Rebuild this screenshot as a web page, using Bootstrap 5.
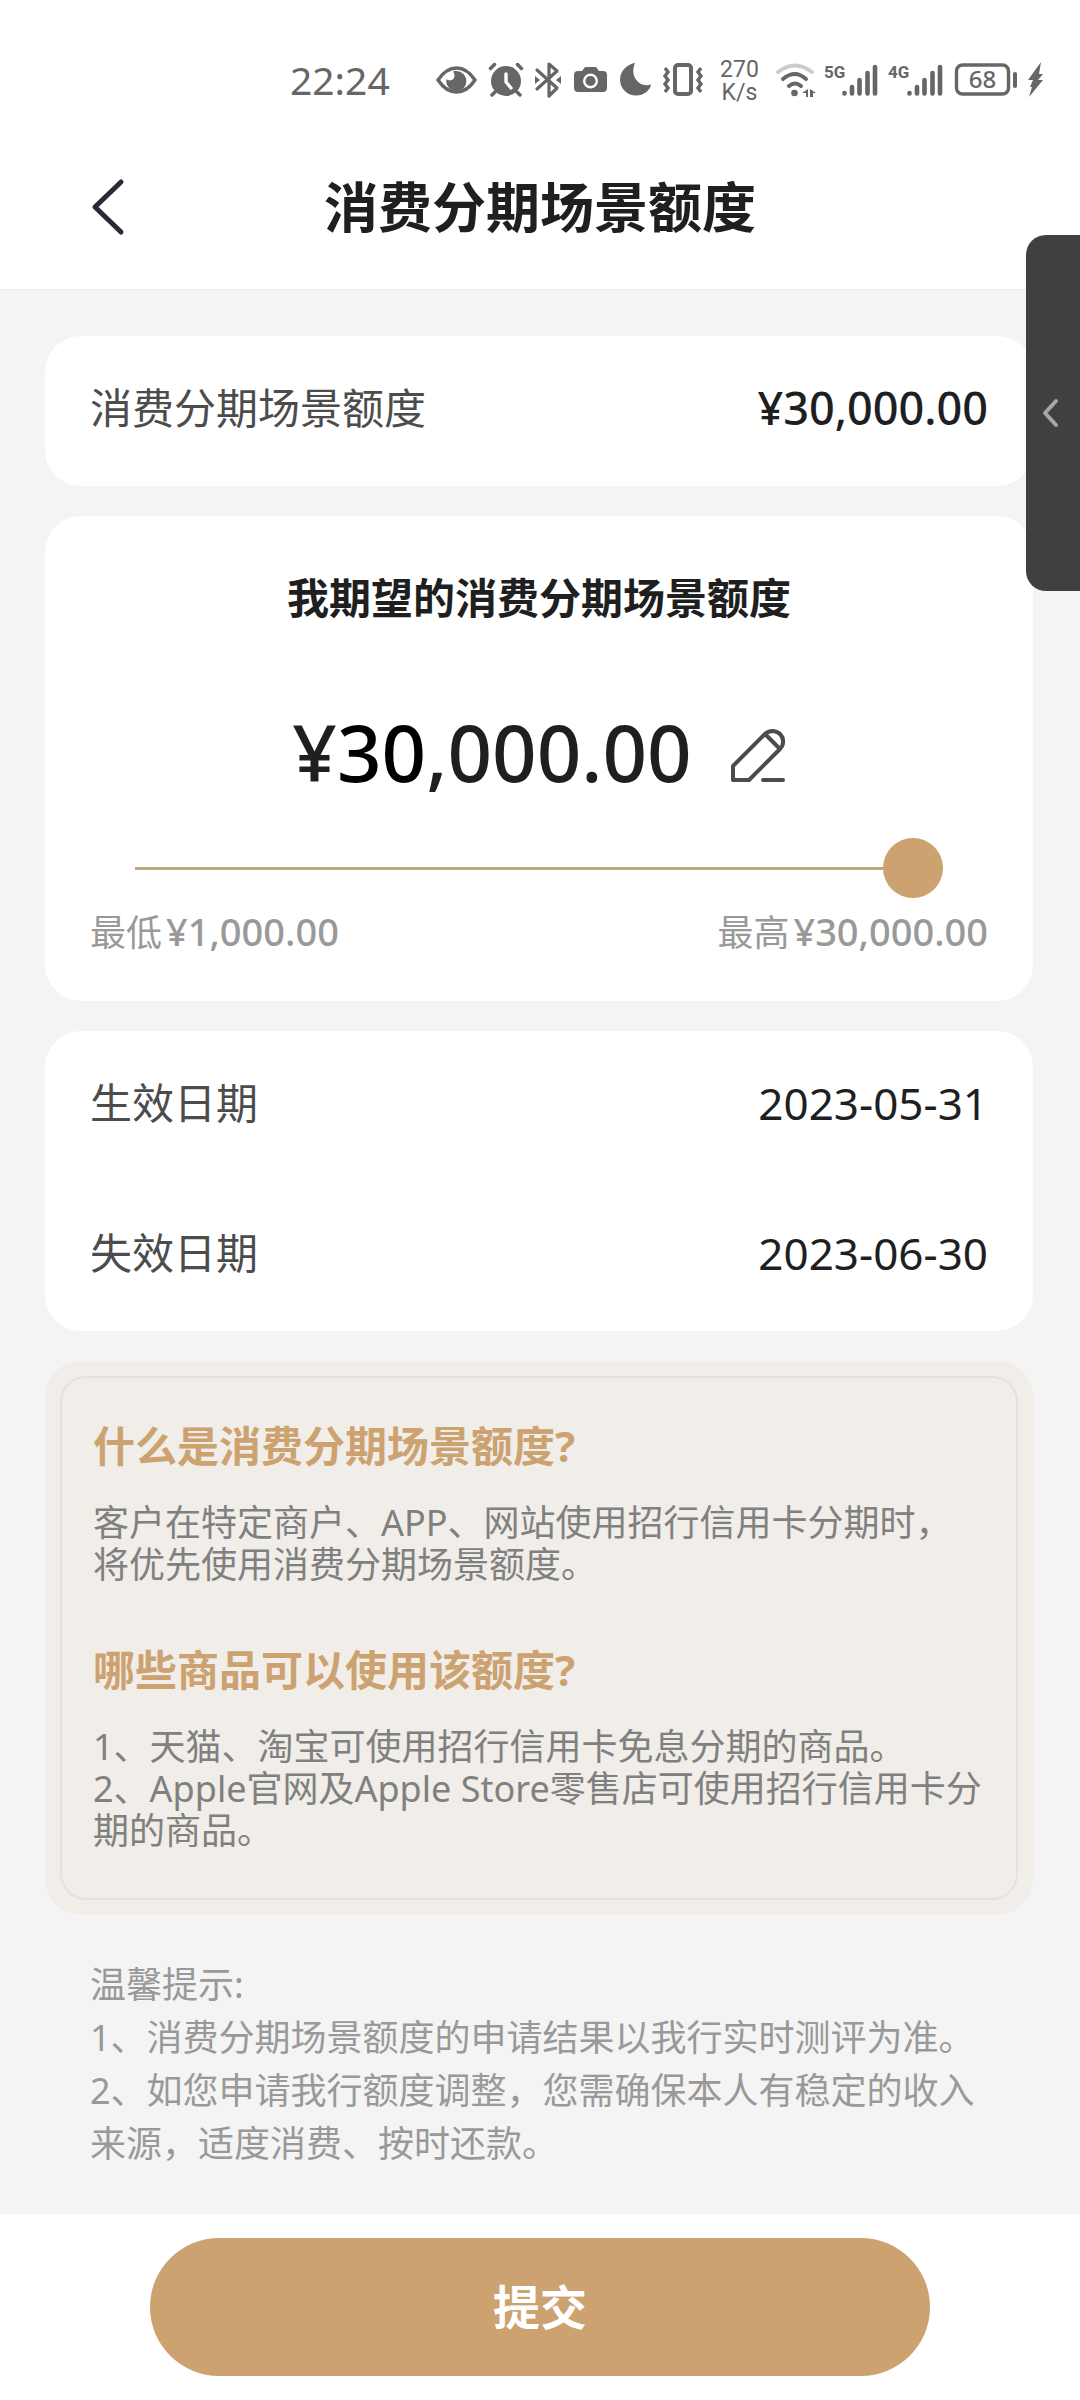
<!DOCTYPE html>
<html lang="zh-CN">
<head>
<meta charset="utf-8">
<meta name="viewport" content="width=device-width, initial-scale=1">
<title>消费分期场景额度</title>
<link rel="stylesheet" href="https://cdn.jsdelivr.net/npm/bootstrap@5.3.0/dist/css/bootstrap.min.css">
<style>
  :root { --gold: #cca271; --ink: #1f1f1f; --label: #4c4c4c; --muted: #999; --status: #666; }
  body { font-family: "Noto Sans", "Noto Sans CJK SC", sans-serif; background: #f4f4f4; color: var(--ink); }
  .status-bar { height: 160px; padding: 0 38px 0 290px; color: var(--status); }
  .status-time { font-size: 39px; line-height: 48px; }
  .status-icons { gap: 12px; }
  .status-icons svg { display: block; overflow: visible; }
  .net-speed { width: 49px; padding-top: 2px; font: 23px/23px Roboto, sans-serif; }
  .title-bar { height: 130px; padding: 0 90px 36px; border-bottom: 1px solid #ececec; }
  .title-bar h1 { font-size: 54px; line-height: 64px; }
  .side-slot { width: 54px; }
  .panels { padding: 46px 47px 0 45px; gap: 30px; }
  .panel { border: 0; border-radius: 36px; }
  .line-item { height: 150px; padding: 0 45px 6px; font-size: 42px; line-height: 60px; }
  .line-item dt { color: var(--label); font-weight: 400; }
  .line-item dd { font-size: 44px; }
  .line-item .money { font-size: 45px; font-weight: 500; }
  .wish { padding: 52px 45px 44px; }
  .wish h2 { font-size: 42px; line-height: 60px; }
  .wish-amount { font-size: 78px; line-height: 100px; font-weight: 500; gap: 38px; margin-top: 74px; }
  .edit-btn { padding: 6px 0 0; }
  .wish-slider { padding: 0 45px; margin-top: 36px; }
  .amount-range { -webkit-appearance: none; appearance: none; display: block; width: 100%; height: 60px; margin: 0; background: linear-gradient(#bca97a, #bca97a) center / 100% 3px no-repeat; }
  .amount-range::-webkit-slider-thumb { -webkit-appearance: none; width: 60px; height: 60px; border-radius: 50%; background: var(--gold); }
  .amount-range::-moz-range-thumb { width: 60px; height: 60px; border: 0; border-radius: 50%; background: var(--gold); }
  .limits { color: var(--muted); font-size: 36px; line-height: 48px; margin-top: 9px; }
  .limits b { font-size: 38px; font-weight: 500; margin-left: 4px; }
  .faq { background: #f1ede8; padding: 15px; }
  .faq-inner { border: 2px solid #e8e1d9; border-radius: 26px; padding: 38px 31px 46px; }
  .faq h3 { color: var(--gold); font-size: 42px; line-height: 60px; margin-bottom: 26px; }
  .faq p { color: #808080; font-size: 36px; line-height: 42px; margin-bottom: 54px; }
  .faq p:last-child { margin-bottom: 0; }
  .tips { color: var(--muted); font-size: 36px; line-height: 53px; padding: 43px 90px 44px; }
  .submit-bar { padding: 24px 150px; }
  .submit-btn { --bs-btn-bg: #cca271; --bs-btn-color: #fff; --bs-btn-hover-bg: #bd9361; --bs-btn-hover-color: #fff; --bs-btn-active-bg: #b18755; --bs-btn-border-width: 0; height: 138px; font-size: 47px; }
  .side-tab { top: 235px; right: 0; width: 54px; height: 356px; background: #404040; border-radius: 20px 0 0 20px; }
</style>
</head>
<body class="position-relative">
<header class="bg-white">
  <div class="status-bar d-flex align-items-center justify-content-between">
    <span class="status-time">22:24</span>
    <div class="status-icons d-flex align-items-center">
      <svg width="41" height="36" viewBox="0 0 41 36" fill="none" stroke="currentColor" stroke-width="3.400"><path d="M2 18C8 9 14 6 20.500 6S33 9 39 18C33 27 27 30 20.500 30S8 27 2 18Z"/><path fill="currentColor" stroke="none" d="M20 9a10 10 0 1 1-9.500 8c3 3 8 1 8-3 0-2-.5-3-1.500-4.500 1-.4 2-.5 3-.5Z"/></svg>
      <svg width="34" height="36" viewBox="0 0 34 36"><circle cx="17" cy="19" r="15" fill="currentColor"/><path d="M1.500 6.500l4-4M32.500 6.500l-4-4M6 30l-3 3M28 30l3 3" stroke="currentColor" stroke-width="3.500" stroke-linecap="round"/><path d="M17 12v8l5 6" fill="none" stroke="#fff" stroke-width="3.400" stroke-linecap="round" stroke-linejoin="round"/></svg>
      <svg width="26" height="36" viewBox="0 0 26 36" fill="none" stroke="currentColor" stroke-width="3.200" stroke-linecap="round" stroke-linejoin="round"><path d="M2 8l20 18-8 8V2l8 7L2 27"/><path fill="currentColor" stroke="none" d="M0 14l5 4-5 4zM26 14l-5 4 5 4z"/></svg>
      <svg width="35" height="36" viewBox="0 0 35 36"><path fill="currentColor" d="M5 9h4l3-4h11l3 4h4a4 4 0 0 1 4 4v13a4 4 0 0 1-4 4H5a4 4 0 0 1-4-4V13a4 4 0 0 1 4-4Z"/><circle cx="17.500" cy="19" r="6.300" fill="currentColor" stroke="#fff" stroke-width="2.400"/></svg>
      <svg width="31" height="36" viewBox="0 0 31 36"><path fill="currentColor" d="M15 1C8 2 0 8 0 18a16 16 0 0 0 16 15.500c8 0 14-5 15-11C20 26 9 15 15 1Z"/></svg>
      <svg width="40" height="36" viewBox="0 0 40 36" fill="none" stroke="currentColor"><rect x="12" y="3" width="16" height="29" rx="3" stroke-width="4"/><path stroke-width="3.400" d="M2 6l3 4-3 4 3 4-3 4 3 4-3 4M38 6l-3 4 3 4-3 4 3 4-3 4 3 4"/></svg>
      <div class="net-speed text-center">270<br>K/s</div>
      <svg width="37" height="36" viewBox="0 0 37 36" fill="none" stroke-width="4" stroke-linecap="round"><path stroke="#ccc" d="M2 10Q19 -3 36 10"/><path stroke="currentColor" d="M7 17Q19 7 30 17M13 24Q19 19 25 24"/><circle cx="18.500" cy="31" r="3.300" fill="currentColor"/><path fill="currentColor" d="M32 27v8h-2v-4h-4zM34 27l6 4h-3v4h-3z"/></svg>
      <svg width="52" height="36" viewBox="0 0 52 36"><text x="-1" y="16" font-family="Roboto" font-size="17" font-weight="700" fill="currentColor">5G</text><path stroke="currentColor" stroke-width="4.600" stroke-linecap="round" d="M19.500 31.500v-.5M27 31.500V25M34.500 31.500V18M42.500 31.500V11M50 31.500V5"/></svg>
      <svg width="53" height="36" viewBox="0 0 53 36"><text x="-1" y="16" font-family="Roboto" font-size="17" font-weight="700" fill="currentColor">4G</text><path stroke="currentColor" stroke-width="4.600" stroke-linecap="round" d="M20.500 31.500v-.5M28 31.500V25M35.500 31.500V18M43.500 31.500V11M51 31.500V5"/></svg>
      <svg width="64" height="36" viewBox="0 0 64 36"><rect x="2.500" y="3" width="52" height="29" rx="6" fill="none" stroke="currentColor" stroke-width="3.400"/><path stroke="currentColor" stroke-width="4" stroke-linecap="round" d="M61 12v12"/><text x="28.500" y="26" text-anchor="middle" font-family="Noto Sans" font-size="24" font-weight="500" fill="currentColor">68</text></svg>
      <svg width="12" height="36" viewBox="0 0 12 36"><path fill="currentColor" d="M11 0L-2 18h5l-3 7h2L-1 35l14-17H8l5-6H9z"/></svg>
    </div>
  </div>
  <nav class="title-bar d-flex align-items-center justify-content-between" aria-label="页面导航">
    <a href="#" class="side-slot d-block" aria-label="返回"><svg class="d-block" width="40" height="58" viewBox="0 0 40 58" fill="none" stroke="#2b2937" stroke-width="5" stroke-linecap="round" stroke-linejoin="round"><path d="M31 4L5 29l26 25"/></svg></a>
    <h1 class="fw-bold m-0">消费分期场景额度</h1>
    <span class="side-slot"></span>
  </nav>
</header>

<main>
  <div class="panels d-flex flex-column">
    <section class="card panel">
      <dl class="m-0">
        <div class="line-item d-flex align-items-center justify-content-between"><dt>消费分期场景额度</dt><dd class="money m-0">¥30,000.00</dd></div>
      </dl>
    </section>

    <section class="card panel wish">
      <h2 class="fw-bold text-center m-0"><label for="amount">我期望的消费分期场景额度</label></h2>
      <div class="wish-amount d-flex align-items-center justify-content-center">
        <output for="amount">¥<span class="text-black">30</span>,000.00</output>
        <button type="button" class="edit-btn btn border-0 lh-1" aria-label="编辑额度"><svg class="d-block" width="56" height="56" viewBox="0 0 56 56" fill="none" stroke="#4c4c4c" stroke-width="4" stroke-linecap="round" stroke-linejoin="round"><path d="M3 53V39L35 7A10.500 10.500 0 0 1 50 22L19 53ZM35 7L50 22M33 53h20"/></svg></button>
      </div>
      <div class="wish-slider"><input type="range" class="amount-range" id="amount" min="1000" max="30000" step="1000" value="30000"></div>
      <div class="limits d-flex justify-content-between"><span>最低<b>¥1,000.00</b></span><span>最高<b>¥30,000.00</b></span></div>
    </section>

    <section class="card panel">
      <dl class="m-0">
        <div class="line-item d-flex align-items-center justify-content-between"><dt>生效日期</dt><dd class="m-0">2023-05-31</dd></div>
        <div class="line-item d-flex align-items-center justify-content-between"><dt>失效日期</dt><dd class="m-0">2023-06-30</dd></div>
      </dl>
    </section>

    <section class="card panel faq">
      <div class="faq-inner">
        <h3 class="fw-bold">什么是消费分期场景额度?</h3>
        <p>客户在特定商户、APP、网站使用招行信用卡分期时，将优先使用消费分期场景额度。</p>
        <h3 class="fw-bold">哪些商品可以使用该额度?</h3>
        <p>1、天猫、淘宝可使用招行信用卡免息分期的商品。<br>2、Apple官网及Apple Store零售店可使用招行信用卡分期的商品。</p>
      </div>
    </section>
  </div>

  <p class="tips m-0">温馨提示:<br>1、消费分期场景额度的申请结果以我行实时测评为准。<br>2、如您申请我行额度调整，您需确保本人有稳定的收入来源，适度消费、按时还款。</p>
</main>

<footer class="submit-bar bg-white">
  <button type="button" class="btn submit-btn w-100 rounded-pill fw-bold">提交</button>
</footer>

<button type="button" class="side-tab btn position-absolute border-0 py-0 ps-0 pe-1 d-flex align-items-center justify-content-center" aria-label="展开侧边栏"><svg width="18" height="30" viewBox="0 0 18 30" fill="none" stroke="#a6a6a6" stroke-width="4" stroke-linecap="round" stroke-linejoin="round"><path d="M14 3L3 15l11 12"/></svg></button>
<script src="https://cdn.jsdelivr.net/npm/bootstrap@5.3.0/dist/js/bootstrap.bundle.min.js"></script>
</body>
</html>
